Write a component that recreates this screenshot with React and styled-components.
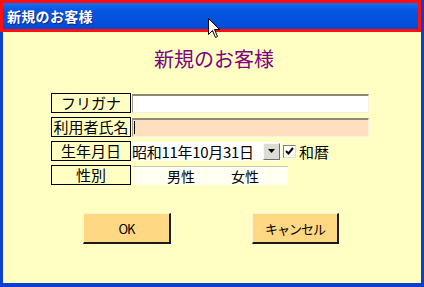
import React from "react";
import styled, { createGlobalStyle } from "styled-components";

const GlobalStyle = createGlobalStyle`
    html, body {
      margin: 0;
      padding: 0;
      background: #ffffff;
    }
    body {
      font-family: "Noto Sans CJK JP", "Noto Sans", sans-serif;
    }
  `,
  Frame = styled.div`
    position: relative;
    width: 424px;
    height: 287px;
    display: flex;
    flex-direction: column;
    background: #0b3fcf;
    overflow: hidden;
  `,
  TitleBar = styled.div`
    box-sizing: border-box;
    height: 32px;
    margin-right: 3px;
    border: 3px solid #ff1010;
    background: linear-gradient(to bottom, #1a6cf2 0%, #0455e0 30%, #0350dc 75%, #0a48d0 100%);
    display: flex;
    align-items: center;
    padding-left: 4px;
  `,
  TitleText = styled.div`
    color: #ffffff;
    font-size: 14px;
    font-weight: bold;
    letter-spacing: 0.3px;
    text-shadow: 1px 1px 0 #0a2a8a;
  `,
  Body = styled.div`
    flex: 1;
    margin: 0 3px 4px 3px;
    background: #ffffc4;
    display: flex;
    flex-direction: column;
  `,
  Heading = styled.h1`
    margin: 15px 0 0 0;
    font-size: 20px;
    line-height: 24px;
    font-weight: normal;
    color: #800080;
    text-align: center;
    padding-left: 4px;
  `,
  Form = styled.div`
    margin: 22px 0 0 48px;
    display: flex;
    flex-direction: column;
    gap: 4px;
  `,
  Row = styled.div`
    display: flex;
    align-items: center;
    height: 20px;
  `,
  Label = styled.div`
    box-sizing: border-box;
    width: 80px;
    height: 20px;
    border: 1px solid #000000;
    background: #ffffc4;
    font-size: 15px;
    line-height: 18px;
    text-align: center;
    color: #000000;
  `,
  Field = styled.div`
    box-sizing: border-box;
    width: 237px;
    height: 19px;
    margin-left: 1px;
    background: ${(p) => p.$bg || "#ffffff"};
    border-top: 2px solid #8c8a70;
    border-left: 1px solid #9c9a80;
    border-right: 1px solid #f4f2e0;
    border-bottom: 1px solid #f4f2e0;
    display: flex;
    align-items: center;
    padding-left: 1px;
  `,
  Caret = styled.span`
    width: 1px;
    height: 13px;
    background: #000000;
  `,
  Combo = styled.div`
    box-sizing: border-box;
    width: 149px;
    height: 19px;
    margin-left: 1px;
    background: #ffffff;
    display: flex;
    align-items: center;
  `,
  ComboText = styled.div`
    flex: 1;
    font-size: 15px;
    line-height: 19px;
    letter-spacing: -0.3px;
    white-space: nowrap;
    color: #000000;
  `,
  ArrowButton = styled.div`
    box-sizing: border-box;
    width: 17px;
    height: 17px;
    margin-right: 1px;
    background: #dcdcd4;
    border-top: 1px solid #f8f8f8;
    border-left: 1px solid #f8f8f8;
    border-right: 1px solid #707070;
    border-bottom: 1px solid #707070;
    display: flex;
    align-items: center;
    justify-content: center;
  `,
  Check = styled.div`
    box-sizing: border-box;
    width: 13px;
    height: 13px;
    margin-left: 2px;
    background: #ffffff;
    border-top: 1px solid #808080;
    border-left: 1px solid #808080;
    border-right: 1px solid #e0e0e0;
    border-bottom: 1px solid #e0e0e0;
    display: flex;
    align-items: center;
    justify-content: center;
  `,
  CheckLabel = styled.span`
    margin-left: 3px;
    font-size: 15px;
    color: #000000;
  `,
  Gender = styled.div`
    box-sizing: border-box;
    width: 155px;
    height: 19px;
    margin-left: 2px;
    background: #fffff2;
    border-top: 1px solid #c8c6b0;
    display: flex;
    align-items: center;
    padding-left: 16px;
  `,
  Option = styled.span`
    width: 64px;
    text-align: center;
    font-size: 14px;
    color: #000000;
  `,
  Buttons = styled.div`
    display: flex;
    gap: 81px;
    margin: 28px 0 0 80px;
  `,
  Button = styled.button`
    box-sizing: border-box;
    width: ${(p) => p.$w}px;
    height: 31px;
    padding: 0;
    background: #ffd884;
    border-top: 1px solid #fff4d0;
    border-left: 1px solid #fff4d0;
    border-right: 2px solid #1a1a1a;
    border-bottom: 2px solid #1a1a1a;
    font-family: "Noto Sans CJK JP", sans-serif;
    font-size: 13px;
    letter-spacing: -1px;
    color: #000000;
  `,
  Cursor = styled.svg`
    position: absolute;
    left: 208px;
    top: 18px;
  `;

const App = () => (
  <Frame>
    <GlobalStyle />
    <TitleBar>
      <TitleText>新規のお客様</TitleText>
    </TitleBar>
    <Body>
      <Heading>新規のお客様</Heading>
      <Form>
        <Row>
          <Label>フリガナ</Label>
          <Field />
        </Row>
        <Row>
          <Label>利用者氏名</Label>
          <Field $bg="#ffdfc0">
            <Caret />
          </Field>
        </Row>
        <Row>
          <Label>生年月日</Label>
          <Combo>
            <ComboText>昭和11年10月31日</ComboText>
            <ArrowButton>
              <svg width="7" height="4" viewBox="0 0 7 4">
                <path d="M0 0 H7 L3.5 4 Z" fill="#000" />
              </svg>
            </ArrowButton>
          </Combo>
          <Check>
            <svg width="9" height="8" viewBox="0 0 9 8">
              <path d="M1 4 L3.5 6.5 L8 1" fill="none" stroke="#000" strokeWidth="2" />
            </svg>
          </Check>
          <CheckLabel>和暦</CheckLabel>
        </Row>
        <Row>
          <Label>性別</Label>
          <Gender>
            <Option>男性</Option>
            <Option>女性</Option>
          </Gender>
        </Row>
      </Form>
      <Buttons>
        <Button $w={88}>OK</Button>
        <Button $w={87}>キャンセル</Button>
      </Buttons>
    </Body>
    <Cursor width="13" height="21" viewBox="0 0 13 21">
      <path
        d="M0.5 0.5 V16.5 L4.5 12.5 L7.5 19.5 L9.5 18.5 L6.5 11.5 H11.5 Z"
        fill="#ffffff"
        stroke="#000000"
        strokeWidth="1"
      />
    </Cursor>
  </Frame>
);

export default App;
